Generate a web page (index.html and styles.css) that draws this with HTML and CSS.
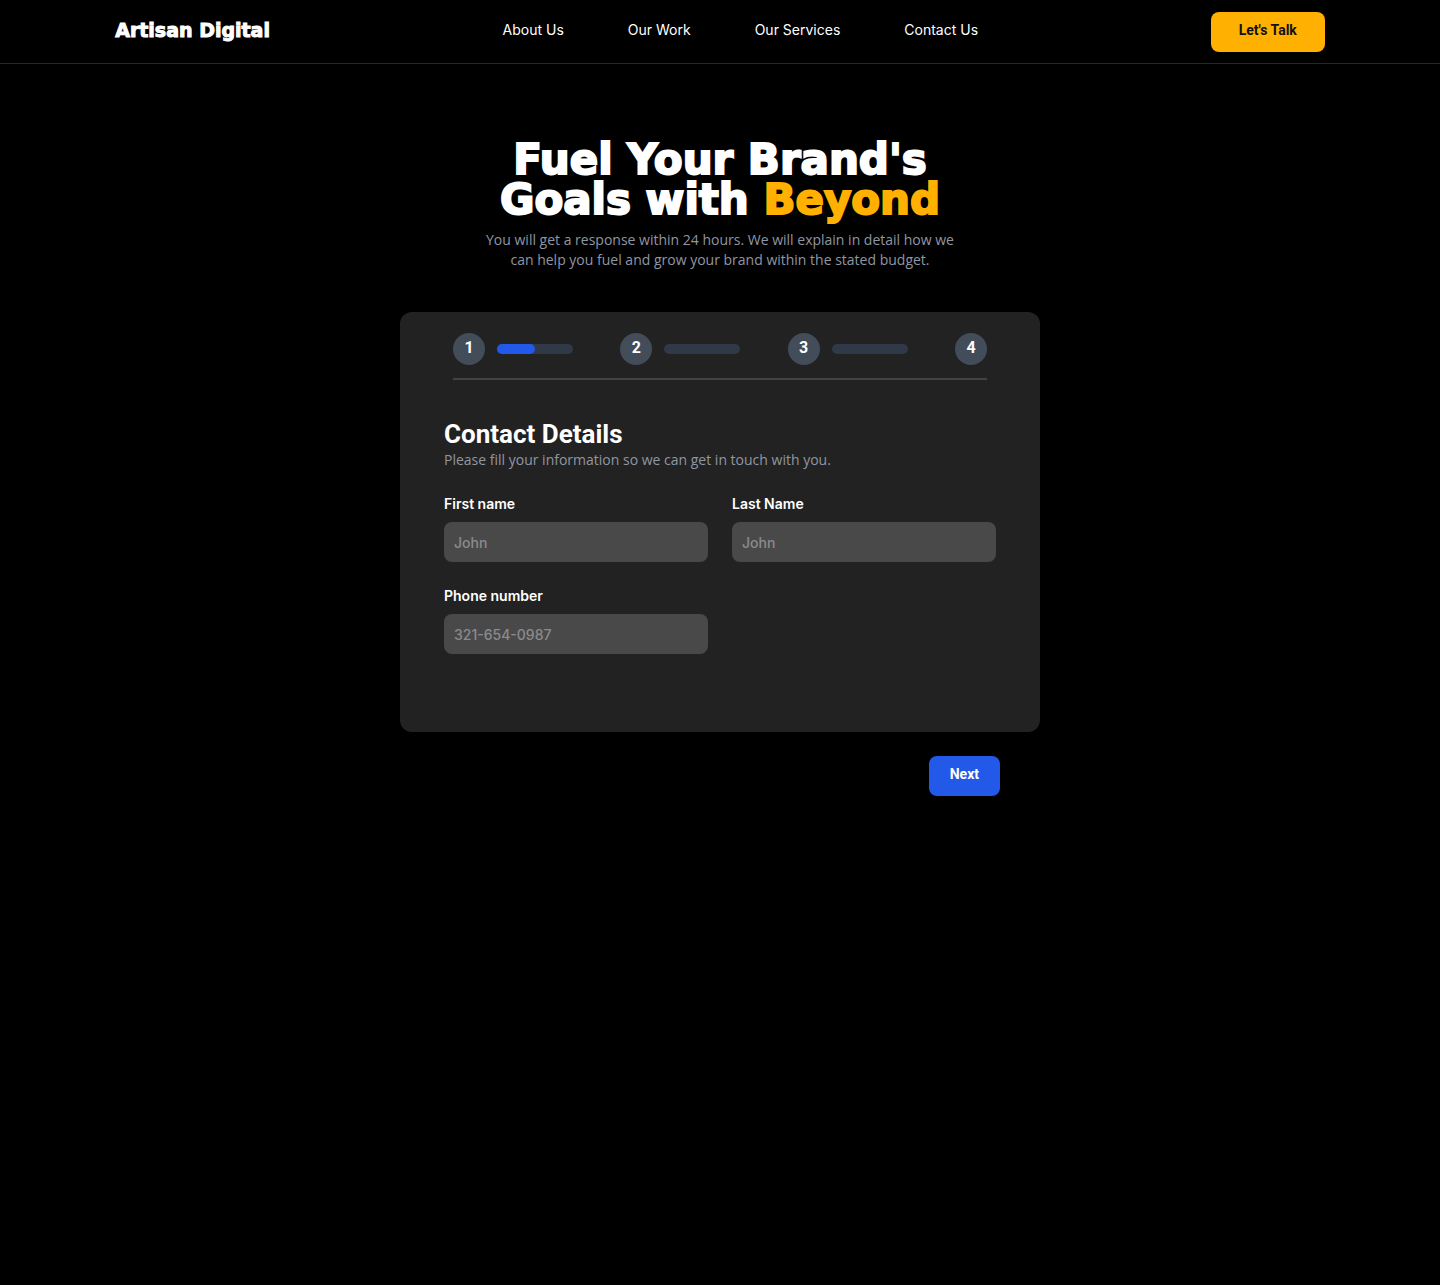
FILE: index.html
```html
<!DOCTYPE html>
<html lang="en">
<head>
<meta charset="utf-8">
<meta name="viewport" content="width=device-width, initial-scale=1">
<title>Artisan Digital</title>
<link rel="stylesheet" href="styles.css">
</head>
<body>
<header class="site-header">
  <a class="logo" href="#">Artisan Digital</a>
  <nav class="nav">
    <a href="#">About Us</a>
    <a href="#">Our Work</a>
    <a href="#">Our Services</a>
    <a href="#">Contact Us</a>
  </nav>
  <button class="button button-talk" type="button">Let's Talk</button>
</header>
<main class="main">
  <section class="intro">
    <h1 class="title">Fuel Your Brand's<br>Goals with <span class="accent">Beyond</span></h1>
    <p class="lead">You will get a response within 24 hours. We will explain in detail how we<br>can help you fuel and grow your brand within the stated budget.</p>
  </section>
  <form class="wizard">
    <div class="card">
      <ol class="steps">
        <li class="step"><span class="number">1</span><span class="track"><span class="fill"></span></span></li>
        <li class="step"><span class="number">2</span><span class="track"></span></li>
        <li class="step"><span class="number">3</span><span class="track"></span></li>
        <li class="step"><span class="number">4</span></li>
      </ol>
      <div class="details">
        <h2 class="subtitle">Contact Details</h2>
        <p class="hint">Please fill your information so we can get in touch with you.</p>
        <div class="fields">
          <div class="field">
            <label for="first-name">First name</label>
            <input id="first-name" type="text" placeholder="John">
          </div>
          <div class="field">
            <label for="last-name">Last Name</label>
            <input id="last-name" type="text" placeholder="John">
          </div>
          <div class="field">
            <label for="phone">Phone number</label>
            <input id="phone" type="tel" placeholder="321-654-0987">
          </div>
        </div>
      </div>
    </div>
    <div class="actions">
      <button class="button button-next" type="button">Next</button>
    </div>
  </form>
</main>
</body>
</html>
```

FILE: styles.css
```css
* {
  box-sizing: border-box;
}

body {
  margin: 0;
  min-height: 100vh;
  background: #000;
  color: #fff;
  font-family: Inter, sans-serif;
  font-size: 14px;
  line-height: 20px;
}

h1, h2, p, ol {
  margin: 0;
  padding: 0;
}

a {
  color: inherit;
  text-decoration: none;
}

.site-header {
  display: flex;
  align-items: center;
  justify-content: space-between;
  height: 64px;
  padding: 0 8%;
  border-bottom: 1px solid #27272a;
}

.logo {
  padding-bottom: 4px;
  font: bold 19px/24px "DejaVu Sans", sans-serif;
  -webkit-text-stroke: 1px currentColor;
}

.nav {
  display: flex;
  gap: 64px;
  padding-bottom: 4px;
  font-size: 14px;
}

.button {
  height: 40px;
  padding: 0 21px 4px;
  border: 0;
  border-radius: 8px;
  font: bold 14px/20px Roboto, sans-serif;
}

.button-talk {
  padding: 0 28px 4px;
  background: #ffb000;
  color: #111;
}

.button-next {
  background: #2259e8;
  color: #fff;
}

.main {
  display: flex;
  flex-direction: column;
  align-items: center;
  padding: 76px 16px;
}

.intro {
  text-align: center;
}

.title {
  font: bold 42px/40px "DejaVu Sans", sans-serif;
  -webkit-text-stroke: 2px currentColor;
}

.accent {
  color: #ffb000;
}

.lead {
  padding-top: 10px;
  color: #9096a3;
  font-family: "Open Sans", sans-serif;
}

.wizard {
  width: 100%;
  max-width: 640px;
  padding-top: 42px;
}

.card {
  min-height: 420px;
  padding: 21px 44px 78px;
  border-radius: 12px;
  background: #222;
}

.steps {
  display: flex;
  justify-content: space-between;
  margin: 0 9px;
  padding-bottom: 13px;
  border-bottom: 2px solid #404448;
  list-style: none;
}

.step {
  display: flex;
  align-items: center;
  gap: 12px;
}

.number {
  width: 32px;
  height: 32px;
  border-radius: 50%;
  background: #434c59;
  font: bold 16px/30px Roboto, sans-serif;
  text-align: center;
}

.track {
  width: 76px;
  height: 10px;
  border-radius: 5px;
  background: #303947;
}

.fill {
  display: block;
  width: 50%;
  height: 100%;
  border-radius: 5px;
  background: #2259e8;
}

.details {
  padding-top: 38px;
}

.subtitle {
  font: bold 26px/32px Roboto, sans-serif;
}

.hint {
  color: #9096a3;
  font-family: "Open Sans", sans-serif;
}

.fields {
  display: grid;
  grid-template-columns: repeat(2, minmax(0, 1fr));
  gap: 24px;
  padding-top: 24px;
}

.field {
  display: flex;
  flex-direction: column;
  gap: 8px;
}

.field label {
  font-weight: 600;
}

.field input {
  width: 100%;
  height: 40px;
  padding: 0 10px;
  border: 0;
  border-radius: 8px;
  background: #494949;
  color: #fff;
  font: 500 14px/20px Inter, sans-serif;
}

.field input::placeholder {
  color: #8b8b8e;
}

.actions {
  display: flex;
  justify-content: flex-end;
  padding: 24px 40px;
}
```
